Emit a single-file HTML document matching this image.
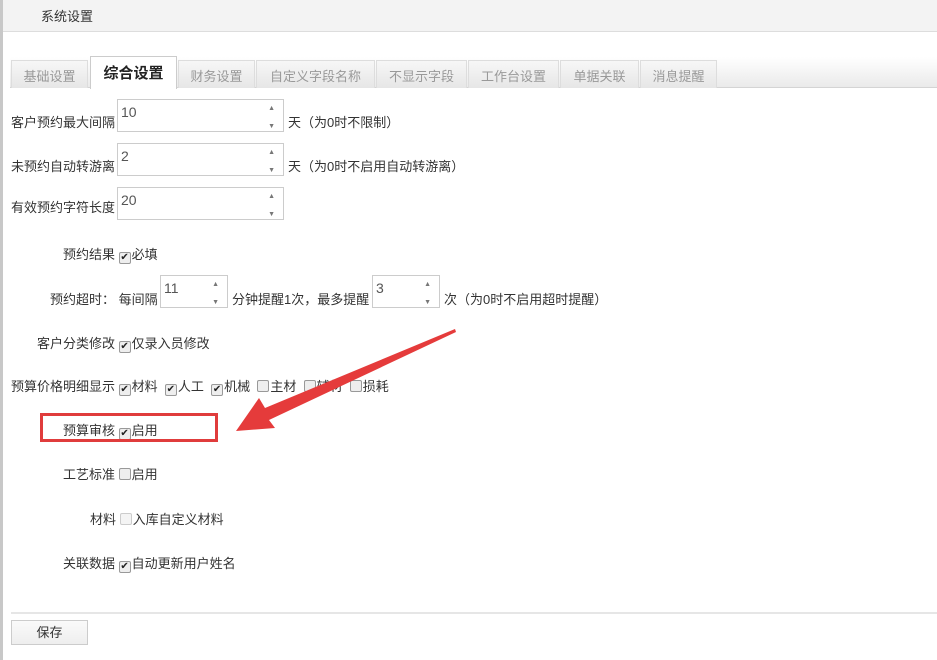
<!DOCTYPE html>
<html><head><meta charset="utf-8"><style>
*{margin:0;padding:0;box-sizing:border-box}
body{width:937px;height:660px;background:#fff;font-family:"Liberation Sans","Microsoft YaHei","Noto Sans CJK SC",sans-serif;font-size:13px;color:#333;position:relative;overflow:hidden}
.a{position:absolute;white-space:nowrap}
.hdr{left:0;top:0;width:937px;height:32px;background:#f3f3f3;border-bottom:1px solid #ddd}
.strip{left:0;top:0;width:3px;height:660px;background:#c8c8c8}
.tabbar{left:10px;top:57px;width:927px;height:31px;background:linear-gradient(#fff,#eaeaea);border-bottom:1px solid #d4d4d4}
.tab{top:60px;height:28px;background:linear-gradient(#f7f7f7,#e6e6e6);border:1px solid #ddd;border-bottom:none;color:#999;text-align:center;line-height:32px;font-size:13px}
.act{top:56px;height:33px;background:#fff;border:1px solid #ccc;border-bottom:none;color:#222;font-weight:bold;font-size:15px;line-height:34px}
.in{border:1px solid #ccc;background:#fff;height:33px;font-size:14px;color:#555;padding:4px 0 0 3px}
.sp{position:absolute;right:8px;font-size:7px;color:#777;line-height:9px;top:4px}
.cb{display:inline-block;width:12px;height:12px;border:1px solid #999;border-radius:2px;background:#eee;vertical-align:-1px;font-size:10px;line-height:10px;text-align:center;color:#222;margin-right:1px}
</style></head><body>
<div class="a hdr"></div>
<div class="a strip"></div>
<div class="a" style="left:41px;top:6px;font-size:13px;color:#333">系统设置</div>
<div class="a tabbar"></div>
<div class="a tab" style="left:11px;width:77px">基础设置</div>
<div class="a tab act" style="left:90px;width:87px">综合设置</div>
<div class="a tab" style="left:178px;width:77px">财务设置</div>
<div class="a tab" style="left:256px;width:119px">自定义字段名称</div>
<div class="a tab" style="left:376px;width:91px">不显示字段</div>
<div class="a tab" style="left:468px;width:91px">工作台设置</div>
<div class="a tab" style="left:560px;width:79px">单据关联</div>
<div class="a tab" style="left:640px;width:77px">消息提醒</div>

<div class="a" style="left:11px;top:112px">客户预约最大间隔</div>
<div class="a in" style="left:117px;top:99px;width:167px">10<div class="sp">▲<br><br>▼</div></div>
<div class="a" style="left:288px;top:112px">天（为0时不限制）</div>

<div class="a" style="left:11px;top:156px">未预约自动转游离</div>
<div class="a in" style="left:117px;top:143px;width:167px">2<div class="sp">▲<br><br>▼</div></div>
<div class="a" style="left:288px;top:156px">天（为0时不启用自动转游离）</div>

<div class="a" style="left:11px;top:197px">有效预约字符长度</div>
<div class="a in" style="left:117px;top:187px;width:167px">20<div class="sp">▲<br><br>▼</div></div>

<div class="a" style="left:63px;top:244px">预约结果 <span class="cb">✔</span>必填</div>

<div class="a" style="left:50px;top:289px">预约超时： 每间隔</div>
<div class="a in" style="left:160px;top:275px;width:68px">11<div class="sp">▲<br><br>▼</div></div>
<div class="a" style="left:232px;top:289px">分钟提醒1次，最多提醒</div>
<div class="a in" style="left:372px;top:275px;width:68px">3<div class="sp">▲<br><br>▼</div></div>
<div class="a" style="left:444px;top:289px">次（为0时不启用超时提醒）</div>

<div class="a" style="left:37px;top:333px">客户分类修改 <span class="cb">✔</span>仅录入员修改</div>
<div class="a" style="left:11px;top:376px">预算价格明细显示 <span class="cb">✔</span>材料 &nbsp;<span class="cb">✔</span>人工 &nbsp;<span class="cb">✔</span>机械 &nbsp;<span class="cb"></span>主材 &nbsp;<span class="cb"></span>辅材 &nbsp;<span class="cb"></span>损耗</div>
<div class="a" style="left:63px;top:420px">预算审核 <span class="cb">✔</span>启用</div>
<div class="a" style="left:40px;top:413px;width:178px;height:29px;border:3px solid #e03c3c"></div>
<div class="a" style="left:63px;top:464px">工艺标准 <span class="cb"></span>启用</div>
<div class="a" style="left:90px;top:509px">材料 <span class="cb" style="border-color:#ccc;background:#f4f4f4"></span>入库自定义材料</div>
<div class="a" style="left:63px;top:553px">关联数据 <span class="cb">✔</span>自动更新用户姓名</div>

<svg class="a" style="left:0;top:0" width="937" height="660"><polygon points="455,329 456,332 269,420 275,428 236,431 259,398 265,408" fill="#e53b3b"/></svg>

<div class="a" style="left:11px;top:612px;width:926px;height:2px;background:#e6e6e6"></div>
<div class="a" style="left:11px;top:620px;width:77px;height:25px;border:1px solid #ccc;background:linear-gradient(#fafafa,#eee);text-align:center;line-height:23px">保存</div>
</body></html>
